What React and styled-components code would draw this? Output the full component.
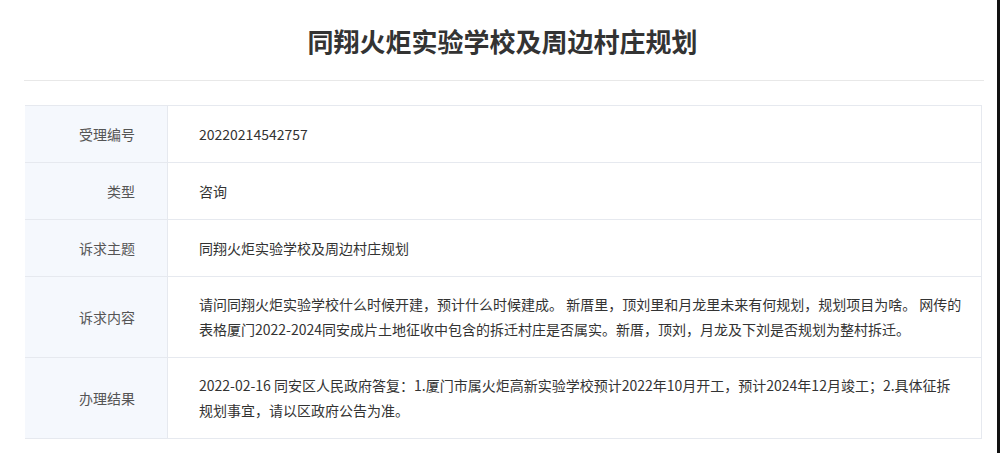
import React from 'react';
import styled, { createGlobalStyle } from 'styled-components';

const GlobalStyle = createGlobalStyle`
    body {
        margin: 0;
        background: #fff;
        font-family: "Microsoft YaHei", "Noto Sans CJK SC", "Noto Sans", sans-serif;
        color: #333;
    }
`;

// lines are split where the original page wraps them
const rows = [
    { label: '受理编号', lines: ['20220214542757'] },
    { label: '类型', lines: ['咨询'] },
    { label: '诉求主题', lines: ['同翔火炬实验学校及周边村庄规划'] },
    {
        label: '诉求内容',
        tall: true,
        lines: [
            '请问同翔火炬实验学校什么时候开建，预计什么时候建成。 新厝里，顶刘里和月龙里未来有何规划，规划项目为啥。 网传的',
            '表格厦门2022-2024同安成片土地征收中包含的拆迁村庄是否属实。新厝，顶刘，月龙及下刘是否规划为整村拆迁。',
        ],
    },
    {
        label: '办理结果',
        tall: true,
        lines: [
            '2022-02-16 同安区人民政府答复：1.厦门市属火炬高新实验学校预计2022年10月开工，预计2024年12月竣工；2.具体征拆',
            '规划事宜，请以区政府公告为准。',
        ],
    },
];

function App() {
    return (
        <>
            <GlobalStyle />
            <Frame>
                <Page>
                    <Header>
                        <Title>同翔火炬实验学校及周边村庄规划</Title>
                    </Header>
                    <Table>
                        {rows.map((row) => (
                            <Row key={row.label} $tall={row.tall}>
                                <Label>{row.label}</Label>
                                <Value>
                                    {row.lines.map((line) => (
                                        <Line key={line}>{line}</Line>
                                    ))}
                                </Value>
                            </Row>
                        ))}
                    </Table>
                </Page>
            </Frame>
        </>
    );
}

export default App;

const Frame = styled.div`
    width: 997px;
    min-height: 100vh;
    border-right: 3px solid #111;
`;

const Page = styled.div`
    width: 960px;
    padding: 0 13px 0 24px;
`;

const Header = styled.div`
    height: 81px;
    display: flex;
    align-items: center;
    justify-content: center;
    border-bottom: 1px solid #e8e8e8;
    box-sizing: border-box;
`;

const Title = styled.h1`
    margin: 0 0 0 -3px;
    font-size: 26px;
    font-weight: bold;
    color: #333;
`;

const Table = styled.div`
    margin: 24px 2px 0 1px;
    border-right: 1px solid #e6e9ef;
`;

const Row = styled.div`
    display: grid;
    grid-template-columns: 143px 1fr;
    min-height: ${(p) => (p.$tall ? '80px' : '56px')};
    border-top: 1px solid #e6e9ef;

    &:last-child {
        border-bottom: 1px solid #e6e9ef;
    }
`;

const Label = styled.div`
    display: flex;
    align-items: center;
    justify-content: flex-end;
    padding-right: 32px;
    background: #f5f8fd;
    border-right: 1px solid #e6e9ef;
    font-size: 14px;
    color: #555;
`;

const Value = styled.div`
    display: flex;
    flex-direction: column;
    justify-content: center;
    padding: 0 0 0 31px;
    font-size: 14px;
    line-height: 25px;
    color: #333;
`;

const Line = styled.span`
    white-space: nowrap;
`;
